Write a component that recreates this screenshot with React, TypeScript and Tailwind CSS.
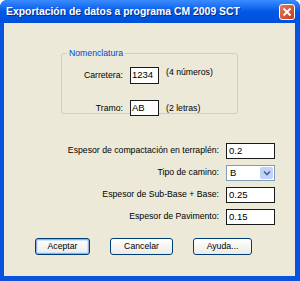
import React from "react";

const font = { fontFamily: '"Liberation Sans", Arial, sans-serif' };

function Field({ label, value }: { label: string; value: string }) {
  return (
    <div className="flex h-[16px] items-center justify-end gap-[7px] pr-[20px]">
      <span className="text-[8.7px] text-black">{label}</span>
      <div className="flex h-[16px] w-[49px] items-center border border-[#1a1a1a] bg-white pl-[2px] text-[9.5px] text-black">
        {value}
      </div>
    </div>
  );
}

export default function App() {
  return (
    <div className="h-[281px] w-[300px] bg-white" style={font}>
      <div className="flex h-[281px] w-[300px] flex-col rounded-t-[7px] bg-[#0A53E0]">
        {/* title bar */}
        <div className="flex h-[23px] items-center justify-between rounded-t-[7px] bg-gradient-to-b from-[#3A8CFF] via-[#0058E6] to-[#0050D8] pl-[6px] pr-[5px]">
          <span className="text-[10.4px] font-bold text-white [text-shadow:1px_1px_0_#0A2A8C]">
            Exportación de datos a programa CM 2009 SCT
          </span>
          <div className="flex h-[16px] w-[16px] items-center justify-center rounded-[3px] border border-white bg-gradient-to-br from-[#E8795A] to-[#C3391A]">
            <svg width="10" height="10" viewBox="0 0 10 10">
              <path d="M1.5 1.5 L8.5 8.5 M8.5 1.5 L1.5 8.5" stroke="white" strokeWidth="1.8" />
            </svg>
          </div>
        </div>

        {/* content */}
        <div className="mb-[5px] ml-[4px] mr-[5px] flex flex-1 flex-col bg-[#ECE9D8]">
          <fieldset className="ml-[57px] mt-[24px] h-[67px] w-[177px] rounded-[3px] border border-[#D0D0BF] pb-[2px] pt-[7px]">
            <legend className="ml-[5px] px-[2px] text-[8.7px] text-[#0046D5]">Nomenclatura</legend>
            <div className="flex h-[17px] items-center">
              <span className="w-[61px] text-right text-[8.7px] text-black">Carretera:</span>
              <div className="ml-[7px] flex h-[17px] w-[29px] items-center border border-[#1a1a1a] bg-white pl-[1px] text-[9.5px] text-black">
                1234
              </div>
              <span className="ml-[7px] -translate-y-[3px] text-[8.7px] text-black">(4 números)</span>
            </div>
            <div className="mt-[16px] flex h-[16px] items-center">
              <span className="w-[61px] text-right text-[8.7px] text-black">Tramo:</span>
              <div className="ml-[7px] flex h-[16px] w-[29px] items-center border border-[#1a1a1a] bg-white pl-[1px] text-[9.5px] text-black">
                AB
              </div>
              <span className="ml-[7px] text-[8.7px] text-black">(2 letras)</span>
            </div>
          </fieldset>

          <div className="mt-[29px] flex flex-col gap-[6px]">
            <Field label="Espesor de compactación en terraplén:" value="0.2" />
            <div className="flex h-[16px] items-center justify-end gap-[7px] pr-[20px]">
              <span className="text-[8.7px] text-black">Tipo de camino:</span>
              <div className="flex h-[16px] w-[49px] items-center border border-[#7F9DB9] bg-white">
                <span className="flex-1 pl-[3px] text-[9.5px] text-black">B</span>
                <div className="mr-[1px] flex h-[12px] w-[13px] items-center justify-center rounded-[2px] bg-[#C1D3FB]">
                  <svg width="8" height="6" viewBox="0 0 8 6">
                    <path d="M1 1.5 L4 4.5 L7 1.5" stroke="#4D6185" strokeWidth="1.6" fill="none" />
                  </svg>
                </div>
              </div>
            </div>
            <Field label="Espesor de Sub-Base + Base:" value="0.25" />
            <Field label="Espesor de Pavimento:" value="0.15" />
          </div>

          <div className="ml-[31px] mt-[13px] flex gap-[20px]">
            <button className="h-[17px] w-[55px] rounded-[3px] border border-[#003C74] bg-gradient-to-b from-white to-[#ECEBE6] text-[8.7px] text-black shadow-[inset_0_0_0_1px_#97AEE2,inset_0_0_0_2px_#CEE7FF]">
              Aceptar
            </button>
            <button className="h-[17px] w-[63px] rounded-[3px] border border-[#003C74] bg-gradient-to-b from-white to-[#ECEBE6] text-[8.7px] text-black">
              Cancelar
            </button>
            <button className="h-[17px] w-[59px] rounded-[3px] border border-[#003C74] bg-gradient-to-b from-white to-[#ECEBE6] text-[8.7px] text-black">
              Ayuda...
            </button>
          </div>
        </div>
      </div>
    </div>
  );
}
